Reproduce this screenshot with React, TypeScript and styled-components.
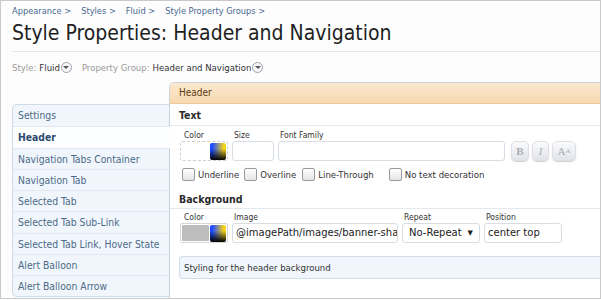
import React from "react";
import styled, { createGlobalStyle } from "styled-components";

const Global = createGlobalStyle`
  html, body { margin: 0; padding: 0; background: #fff; }
  * { box-sizing: border-box; }
`;

const Frame = styled.div`
  width: 601px;
  height: 299px;
  border: 1px solid #c9c9c9;
  background: #fdfdfe;
  overflow: hidden;
  font-family: "DejaVu Sans Condensed", "DejaVu Sans", sans-serif;
  padding-left: 11px;
  display: flex;
  flex-direction: column;
`;

const Breadcrumb = styled.div`
  display: flex;
  gap: 10px;
  margin-top: 3px;
  height: 14px;
  font-size: 9.2px;
  line-height: 14px;
  color: #48698f;
`;

const Title = styled.h1`
  margin: 1px 0 0 0;
  font-size: 21px;
  line-height: 28px;
  font-weight: normal;
  color: #1f1f1f;
  padding-bottom: 4px;
  border-bottom: 1px solid #dfe8ee;
`;

const FilterRow = styled.div`
  display: flex;
  align-items: center;
  margin-top: 8px;
  height: 14px;
  font-size: 9.5px;
  color: #9a9a9a;
`;

const FilterGroup = styled.span`
  display: inline-flex;
  align-items: center;
  margin-right: 10px;
`;

const FilterValue = styled.span`
  color: #333;
  margin-left: 3px;
`;

const DropCircle = styled.span`
  width: 11px;
  height: 11px;
  border-radius: 50%;
  border: 1px solid #9aa3ad;
  background: #f7f7f7;
  display: inline-flex;
  align-items: center;
  justify-content: center;
  margin-left: 1px;
  &::after {
    content: "";
    border-left: 3px solid transparent;
    border-right: 3px solid transparent;
    border-top: 3px solid #555;
    margin-top: 1px;
  }
`;

const Main = styled.div`
  display: flex;
  margin-top: 8px;
  flex: 1;
  min-height: 0;
`;

const SideList = styled.ul`
  list-style: none;
  margin: 22px 0 0 0;
  padding: 0;
  width: 157px;
  flex-shrink: 0;
  border: 1px solid #cddbe6;
  border-right: none;
  border-radius: 5px 0 0 5px;
  background: #f0f6fb;
  align-self: flex-start;
  position: relative;
  z-index: 1;
`;

const SideItem = styled.li<{ $active?: boolean }>`
  height: 21.25px;
  line-height: 20px;
  padding-left: 5px;
  font-size: 10.3px;
  color: ${(p) => (p.$active ? "#2b4a6f" : "#4d6a88")};
  font-weight: ${(p) => (p.$active ? "bold" : "normal")};
  background: ${(p) => (p.$active ? "#fdfeff" : "transparent")};
  border-top: 1px solid #dfe9f2;
  margin-right: ${(p) => (p.$active ? "-1px" : "0")};
  &:first-child { border-top: none; }
`;

const Panel = styled.div`
  flex: 1;
  border: 1px solid #c9d3dc;
  border-right: none;
  border-bottom: none;
  border-radius: 5px 0 0 0;
  background: #fff;
  display: flex;
  flex-direction: column;
  min-width: 0;
`;

const PanelHead = styled.div`
  height: 21px;
  line-height: 20px;
  padding-left: 9px;
  font-size: 10px;
  color: #5b3b12;
  background: linear-gradient(to bottom, #fce8cf, #f8d9b0);
  border-bottom: 1px solid #efc99a;
  border-radius: 4px 0 0 0;
`;

const SectionHead = styled.div<{ $h: number }>`
  height: ${(p) => p.$h}px;
  line-height: ${(p) => p.$h}px;
  padding-left: 9px;
  font-size: 10.5px;
  font-weight: bold;
  color: #2a2a2a;
  border-bottom: 1px solid #e2eaf0;
`;

const SectionBody = styled.div<{ $top: number }>`
  padding: ${(p) => p.$top}px 0 0 12px;
`;

const FieldRow = styled.div`
  display: flex;
  align-items: flex-end;
  gap: 4px;
`;

const Field = styled.div`
  display: flex;
  flex-direction: column;
`;

const Label = styled.label`
  font-size: 8.5px;
  color: #333;
  height: 11px;
  line-height: 11px;
  padding-left: 2px;
`;

const ColorBox = styled.div<{ $dashed?: boolean }>`
  width: 48px;
  height: 20px;
  border: 1px ${(p) => (p.$dashed ? "dashed #cfcfcf" : "solid #d6d6d6")};
  border-radius: 2px;
  display: flex;
  align-items: center;
  justify-content: space-between;
  padding: 1px;
  margin-left: -2px;
  background: #fff;
`;

const ColorFill = styled.span<{ $fill?: string }>`
  width: 27px;
  height: 16px;
  background: ${(p) => p.$fill || "transparent"};
  border-radius: 1px;
`;

const Swatch = styled.span`
  width: 16px;
  height: 17px;
  border-radius: 2px;
  background: linear-gradient(to bottom, rgba(0, 0, 0, 0) 35%, #000 100%),
    linear-gradient(to right, #1d4cff 15%, #f2d21c 85%);
`;

const TextInput = styled.div<{ $w: number }>`
  width: ${(p) => p.$w}px;
  height: 20px;
  border: 1px solid #d7dde3;
  border-radius: 3px;
  background: #fff;
  font-family: "DejaVu Sans", sans-serif;
  font-size: 10px;
  line-height: 18px;
  color: #222;
  padding-left: 3px;
  white-space: nowrap;
  overflow: hidden;
  text-overflow: clip;
`;

const Select = styled(TextInput)`
  display: flex;
  justify-content: space-between;
  padding: 0 6px;
  &::after {
    content: "▼";
    font-size: 7px;
    color: #222;
  }
`;

const BtnGroup = styled.div`
  display: flex;
  gap: 3px;
  margin-left: 2px;
`;

const StyleBtn = styled.span<{ $w: number; $italic?: boolean }>`
  width: ${(p) => p.$w}px;
  height: 20px;
  border-radius: 5px;
  background: linear-gradient(to bottom, #fbfbfd, #e2e4ea);
  box-shadow: 0 1px 1px rgba(0, 0, 0, 0.18);
  border: 1px solid #dcdfe6;
  display: flex;
  align-items: center;
  justify-content: center;
  font-family: "Liberation Serif", serif;
  font-size: 11px;
  color: #a9adb6;
  font-weight: ${(p) => (p.$italic ? "normal" : "bold")};
  font-style: ${(p) => (p.$italic ? "italic" : "normal")};
`;

const SmallA = styled.span<{ $size: number }>`
  font-size: ${(p) => p.$size}px;
  font-weight: normal;
  font-style: normal;
`;

const CheckRow = styled.div`
  display: flex;
  align-items: center;
  margin-top: 6px;
  height: 14px;
  padding-left: 0;
`;

const Check = styled.label<{ $gap: number }>`
  display: inline-flex;
  align-items: center;
  font-size: 9.5px;
  color: #333;
  margin-right: ${(p) => p.$gap}px;
  &::before {
    content: "";
    width: 11px;
    height: 11px;
    border: 1px solid #9a9a9a;
    border-radius: 2px;
    background: linear-gradient(to bottom, #fff, #e5e5e5);
    margin-right: 3px;
  }
`;

const BgSection = styled.div`
  margin-top: 8px;
`;

const Desc = styled.div`
  margin: 13px 0 0 9px;
  height: 23px;
  line-height: 21px;
  border: 1px solid #cfdde9;
  border-right: none;
  border-radius: 4px 0 0 4px;
  background: #f0f6fb;
  padding-left: 4px;
  font-size: 9.5px;
  color: #333;
`;

const sideItems = [
  "Settings",
  "Header",
  "Navigation Tabs Container",
  "Navigation Tab",
  "Selected Tab",
  "Selected Tab Sub-Link",
  "Selected Tab Link, Hover State",
  "Alert Balloon",
  "Alert Balloon Arrow",
];

export default function App() {
  return (
    <>
      <Global />
      <Frame>
        <Breadcrumb>
          <span>Appearance &gt;</span>
          <span>Styles &gt;</span>
          <span>Fluid &gt;</span>
          <span>Style Property Groups &gt;</span>
        </Breadcrumb>
        <Title>Style Properties: Header and Navigation</Title>
        <FilterRow>
          <FilterGroup>
            Style:<FilterValue>Fluid</FilterValue>
            <DropCircle />
          </FilterGroup>
          <FilterGroup>
            Property Group:<FilterValue>Header and Navigation</FilterValue>
            <DropCircle />
          </FilterGroup>
        </FilterRow>
        <Main>
          <SideList>
            {sideItems.map((s) => (
              <SideItem key={s} $active={s === "Header"}>
                {s}
              </SideItem>
            ))}
          </SideList>
          <Panel>
            <PanelHead>Header</PanelHead>
            <SectionHead $h={22}>Text</SectionHead>
            <SectionBody $top={4}>
              <FieldRow>
                <Field>
                  <Label>Color</Label>
                  <ColorBox $dashed>
                    <ColorFill />
                    <Swatch />
                  </ColorBox>
                </Field>
                <Field>
                  <Label>Size</Label>
                  <TextInput $w={42} />
                </Field>
                <Field>
                  <Label>Font Family</Label>
                  <TextInput $w={227} />
                </Field>
                <BtnGroup>
                  <StyleBtn $w={18}>B</StyleBtn>
                  <StyleBtn $w={17} $italic>
                    I
                  </StyleBtn>
                  <StyleBtn $w={24} $italic>
                    <SmallA $size={11}>A</SmallA>
                    <SmallA $size={7}>A</SmallA>
                  </StyleBtn>
                </BtnGroup>
              </FieldRow>
              <CheckRow>
                <Check $gap={5}>Underline</Check>
                <Check $gap={6}>Overline</Check>
                <Check $gap={15}>Line-Through</Check>
                <Check $gap={0}>No text decoration</Check>
              </CheckRow>
            </SectionBody>
            <BgSection>
              <SectionHead $h={20}>Background</SectionHead>
              <SectionBody $top={3}>
                <FieldRow>
                  <Field>
                    <Label>Color</Label>
                    <ColorBox>
                      <ColorFill $fill="#bdbdbd" />
                      <Swatch />
                    </ColorBox>
                  </Field>
                  <Field>
                    <Label>Image</Label>
                    <TextInput $w={166}>@imagePath/images/banner-shadow.png</TextInput>
                  </Field>
                  <Field>
                    <Label>Repeat</Label>
                    <Select $w={78}>No-Repeat</Select>
                  </Field>
                  <Field>
                    <Label>Position</Label>
                    <TextInput $w={78}>center top</TextInput>
                  </Field>
                </FieldRow>
              </SectionBody>
              <Desc>Styling for the header background</Desc>
            </BgSection>
          </Panel>
        </Main>
      </Frame>
    </>
  );
}
